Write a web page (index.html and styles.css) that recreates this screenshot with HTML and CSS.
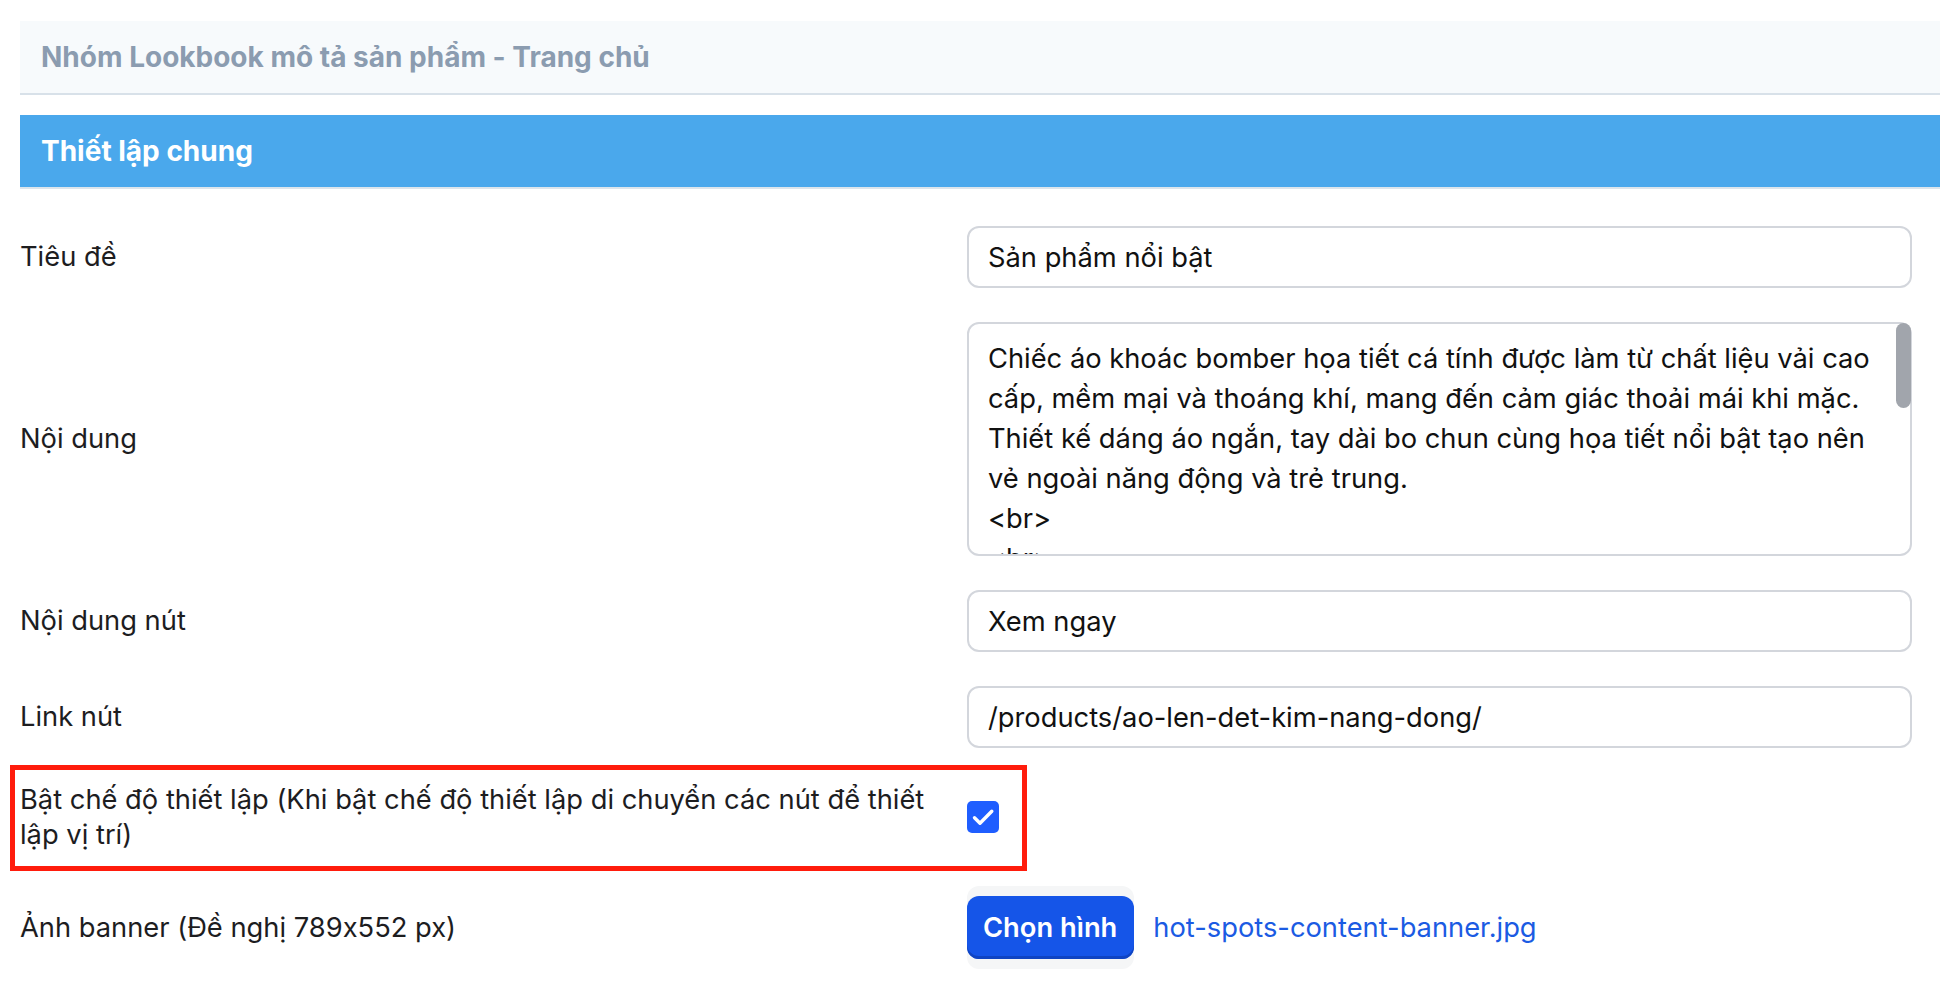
FILE: index.html
```html
<!DOCTYPE html>
<html lang="vi">
<head>
<meta charset="utf-8">
<title>Nhóm Lookbook mô tả sản phẩm - Trang chủ</title>
<link rel="stylesheet" href="styles.css">
</head>
<body>
<div class="page">
  <div class="panel-head">Nhóm Lookbook mô tả sản phẩm - Trang chủ</div>
  <div class="section-title">Thiết lập chung</div>
  <form class="form">
    <div class="row">
      <label class="label" for="f-title">Tiêu đề</label>
      <div class="field"><input id="f-title" class="input" type="text" value="Sản phẩm nổi bật"></div>
    </div>
    <div class="row">
      <label class="label" for="f-content">Nội dung</label>
      <div class="field field-area"><textarea id="f-content" class="textarea">Chiếc áo khoác bomber họa tiết cá tính được làm từ chất liệu vải cao
cấp, mềm mại và thoáng khí, mang đến cảm giác thoải mái khi mặc.
Thiết kế dáng áo ngắn, tay dài bo chun cùng họa tiết nổi bật tạo nên
vẻ ngoài năng động và trẻ trung.
&lt;br&gt;
&lt;br&gt;</textarea><span class="scroll-thumb"></span></div>
    </div>
    <div class="row">
      <label class="label" for="f-btn">Nội dung nút</label>
      <div class="field"><input id="f-btn" class="input" type="text" value="Xem ngay"></div>
    </div>
    <div class="row">
      <label class="label" for="f-link">Link nút</label>
      <div class="field"><input id="f-link" class="input" type="text" value="/products/ao-len-det-kim-nang-dong/"></div>
    </div>
    <div class="row row-marked">
      <label class="label label-wrap" for="f-setup">Bật chế độ thiết lập (Khi bật chế độ thiết lập di chuyển các nút để thiết lập vị trí)</label>
      <div class="field">
        <span class="checkbox" id="f-setup" role="checkbox" aria-checked="true">
          <svg viewBox="0 0 32 32" width="32" height="32"><path d="M7.5 16.8 L13 22.2 L24.8 10.2" fill="none" stroke="#fff" stroke-width="3.4" stroke-linecap="round" stroke-linejoin="round"/></svg>
        </span>
      </div>
      <span class="mark"></span>
    </div>
    <div class="row">
      <span class="label">Ảnh banner (Đề nghị 789x552 px)</span>
      <div class="field field-file">
        <span class="btn-wrap"><button type="button" class="btn">Chọn hình</button></span>
        <a class="file-link" href="#">hot-spots-content-banner.jpg</a>
      </div>
    </div>
  </form>
</div>
</body>
</html>
```
FILE: styles.css
```css
html, body {
  margin: 0;
  background: #ffffff;
}
body {
  font-family: "Inter", "Liberation Sans", sans-serif;
  font-size: 27.3px;
  font-feature-settings: "calt" 0;
  color: #1d1d1f;
  overflow: hidden;
}
.page {
  padding: 21px 0 0 20px;
}
.panel-head {
  height: 72px;
  display: flex;
  align-items: center;
  padding-left: 21px;
  background: #f7fafc;
  border-bottom: 2px solid #d8e1e9;
  color: #8b9cb0;
  font-weight: 700;
  font-size: 28px;
}
.section-title {
  margin-top: 20px;
  height: 72px;
  display: flex;
  align-items: center;
  padding-left: 21px;
  background: #4aa8ec;
  border-bottom: 2px solid #dce5ec;
  color: #ffffff;
  font-weight: 700;
  font-size: 28px;
}
.form {
  display: flex;
  flex-direction: column;
  gap: 34px;
  padding-top: 37px;
}
.row {
  display: grid;
  grid-template-columns: 927px 945px;
  column-gap: 20px;
  align-items: center;
}
.label {
  line-height: 36px;
  color: #1d1d1f;
}
.label-wrap {
  line-height: 35px;
}
.field {
  display: flex;
  align-items: center;
}
.input {
  box-sizing: border-box;
  width: 100%;
  height: 62px;
  padding: 0 19px;
  border: 2px solid #d3d6dc;
  border-radius: 12px;
  font-family: inherit;
  font-size: 27.3px;
  font-feature-settings: "calt" 0;
  color: #111111;
  background: #ffffff;
  outline: none;
}
.field-area {
  position: relative;
}
.textarea {
  box-sizing: border-box;
  display: block;
  width: 100%;
  height: 234px;
  padding: 15px 0 15px 19px;
  border: 2px solid #d3d6dc;
  border-radius: 12px;
  font-family: inherit;
  font-size: 27.3px;
  font-feature-settings: "calt" 0;
  line-height: 40px;
  color: #111111;
  background: #ffffff;
  resize: none;
  outline: none;
  white-space: pre;
  overflow: hidden;
  scrollbar-width: none;
}
.scroll-thumb {
  position: absolute;
  top: 1px;
  right: 1px;
  width: 15px;
  height: 85px;
  border-radius: 8px;
  background: #a1a5ac;
}
.row-marked {
  position: relative;
}
.mark {
  position: absolute;
  left: -10px;
  top: -17px;
  width: 1017px;
  height: 106px;
  box-sizing: border-box;
  border: 5px solid #ff1c0c;
  pointer-events: none;
}
.checkbox {
  width: 32px;
  height: 32px;
  border-radius: 5px;
  background: #1f5eff;
  display: flex;
}
.field-file {
  gap: 19px;
}
.btn-wrap {
  display: flex;
  padding: 10px 0;
  background: #f5f6f7;
  border-radius: 12px;
}
.btn {
  height: 63px;
  padding: 0 17px 0 16px;
  border: 0;
  border-radius: 12px;
  background: #1555e8;
  box-shadow: inset 0 -3px 0 #0f44c2;
  color: #ffffff;
  font-family: inherit;
  font-size: 27.3px;
  font-weight: 600;
  cursor: pointer;
}
.file-link {
  color: #1b5be3;
  text-decoration: none;
}
```
